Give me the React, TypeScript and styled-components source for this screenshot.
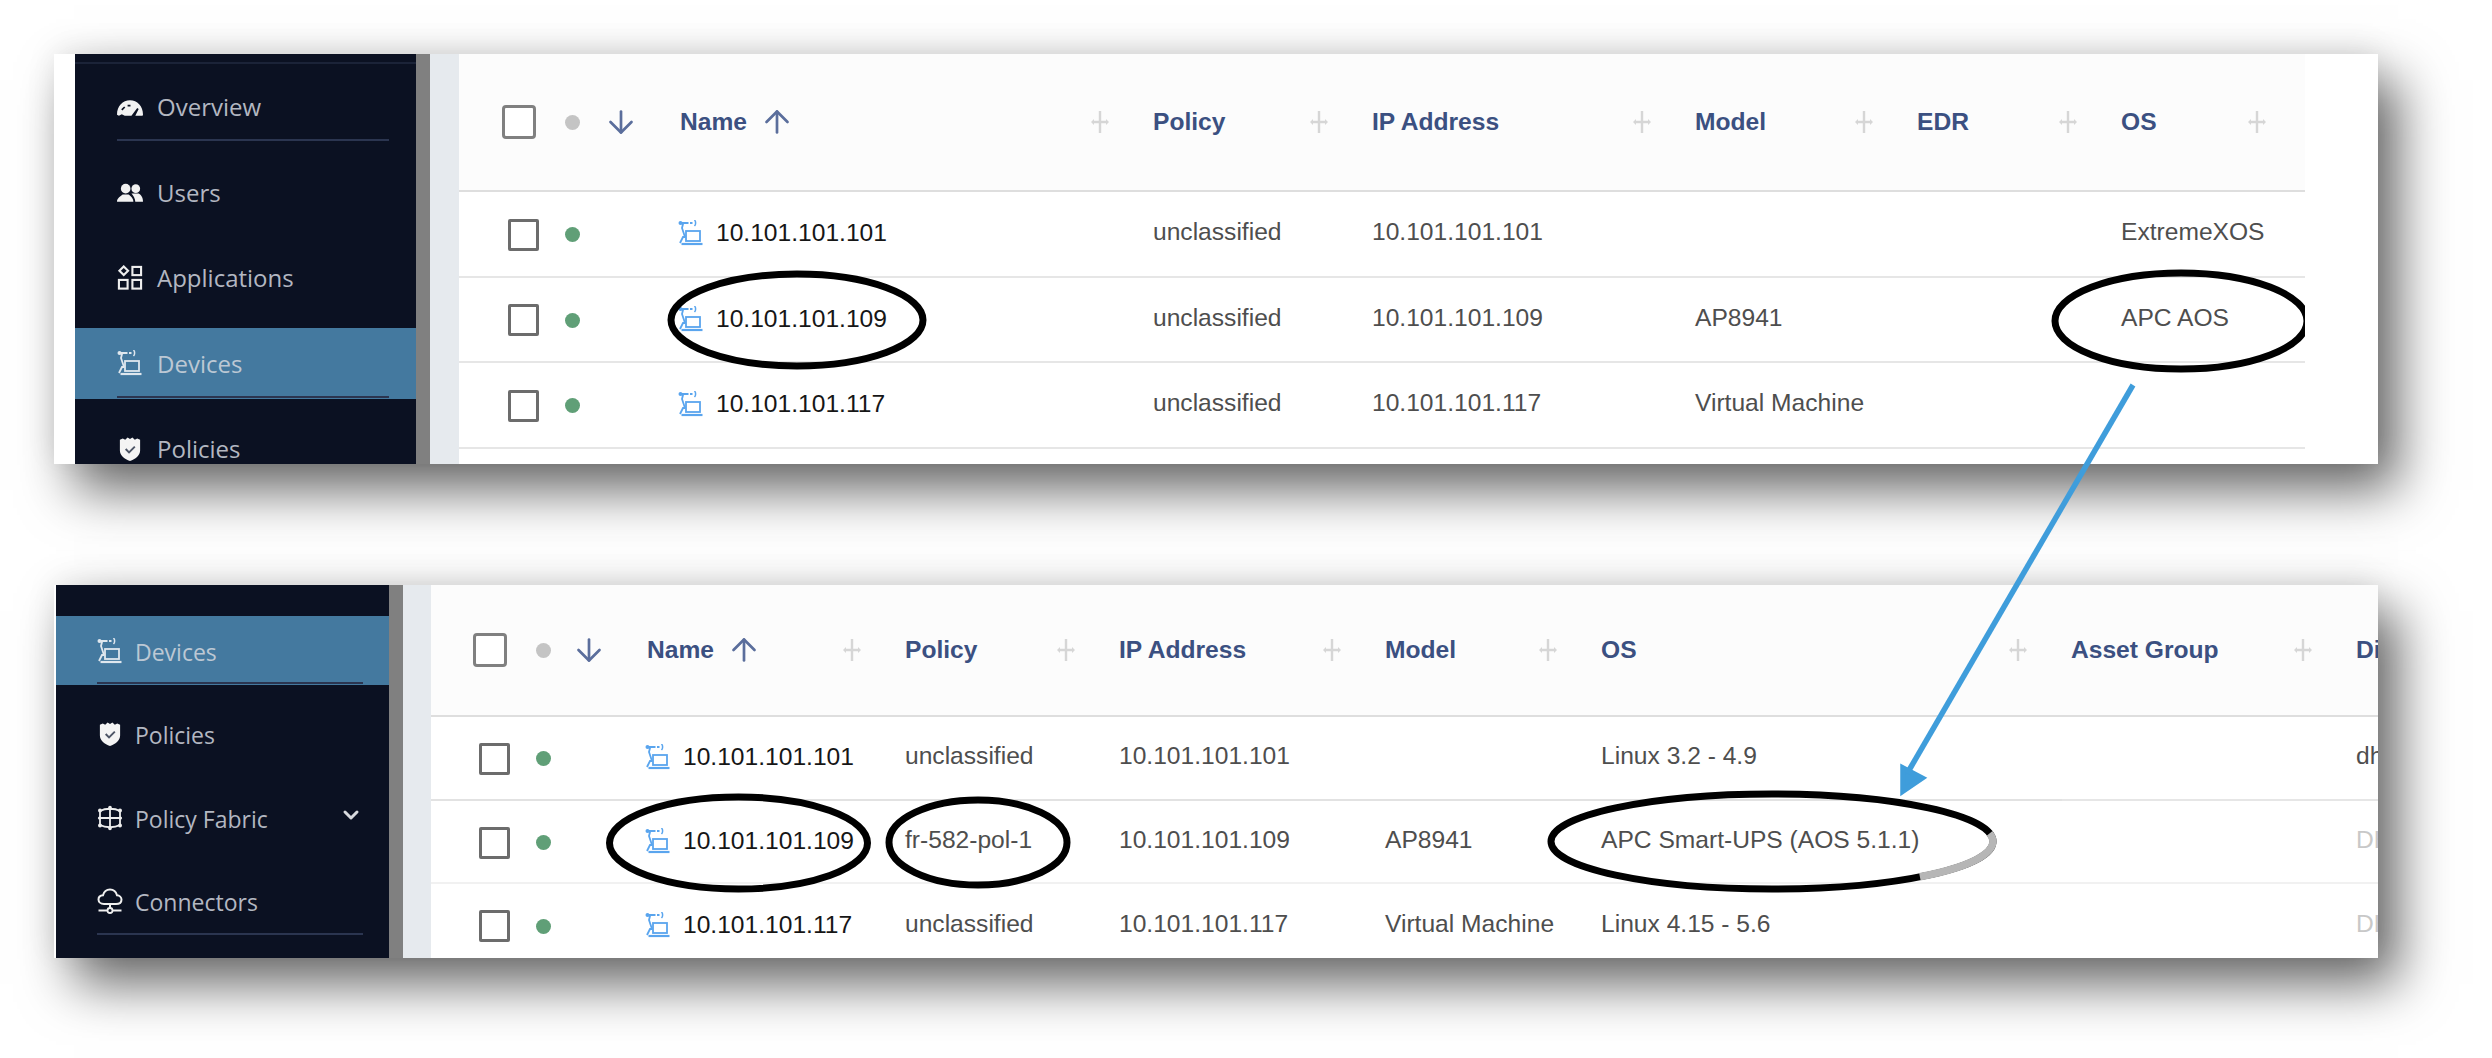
import { ArrowDown, ArrowUp, ChevronDown } from "lucide-react";
import styled, { createGlobalStyle } from "styled-components";

const GlobalStyle = createGlobalStyle`
  html, body {
    margin: 0;
    padding: 0;
    background: #fff;
    overflow: hidden;
  }
`;

function GaugeIcon() {
  return (
    <NavSvg viewBox="0 0 27 24" $color="#f2f2f2">
      <path d="M0 20C0 11 6 5 13.500 5S27 11 27 20l-.5 1H19l3.500-7-1.500-1-6 8H8l-3-1.500-3 1.500z" fill="currentColor" />
      <path d="M5 15l3-3M11 10.500h3" stroke="#0b1122" strokeWidth="1.800" />
    </NavSvg>
  );
}

function UsersIcon() {
  return (
    <NavSvg viewBox="0 0 27 24" $color="#f2f2f2">
      <circle cx="9" cy="8.500" r="5" fill="currentColor" />
      <path d="M0 22c0-4 4-6 6-7.500h6c2 1.500 5 3.500 5 7.500z" fill="currentColor" />
      <circle cx="19.500" cy="8.500" r="4.500" fill="currentColor" />
      <path d="M15 13.500h7.500c2 1 4.500 3.500 4.500 8.500h-8c0-3-2-6.500-4-8.500z" fill="currentColor" />
    </NavSvg>
  );
}

function AppsIcon() {
  return (
    <NavSvg viewBox="0 0 27 27" $color="#eeeeee">
      <g fill="none" stroke="currentColor" strokeWidth="2.200">
        <path d="M7 1.500 11.500 6 7 10.500 2.500 6z" />
        <rect x="16" y="2" width="9" height="8.500" />
        <rect x="2" y="15.500" width="9" height="9" />
        <rect x="16" y="15.500" width="9" height="9" />
      </g>
    </NavSvg>
  );
}

function DeviceIcon({ color }: { color: string }) {
  return (
    <NavSvg viewBox="0 0 25 26" $color={color}>
      <g fill="none" stroke="currentColor" strokeWidth="1.800">
        <path d="M3 3h11" strokeDasharray="7 1.500" />
        <path d="M1.500 3l3 1-1 4 3 9" />
        <path d="M1.500 23l3-6h2.500" />
        <rect x="7.500" y="11" width="14" height="10" />
        <path d="M3 24h21" strokeWidth="2.200" />
      </g>
      <circle cx="2" cy="3" r="2" fill="currentColor" />
      <path d="M16 0c1.500 1.500 1.500 4.500 0 6" fill="none" stroke="currentColor" strokeWidth="1.500" />
    </NavSvg>
  );
}

function ShieldIcon() {
  return (
    <NavSvg viewBox="0 0 25 27" $color="#f4f4f4">
      <path d="M2 4l3-1.500L7.500 4 10 1.500 12.500 3 15 1.500 17.500 4 20 2.500 23 4v11c0 5-5 9-10.500 11C7 24 2 20 2 15z" fill="currentColor" />
      <path d="M8 13.500l3.500 3.500 6-6" fill="none" stroke="#4d5566" strokeWidth="2" />
    </NavSvg>
  );
}

function FabricIcon() {
  return (
    <NavSvg viewBox="0 0 25 26" $color="#eeeeee">
      <path d="M2.500 6C8 3 17 3 22.500 6v14C17 23 8 23 2.500 20zM12.500 2v22M1.500 13h22" fill="none" stroke="currentColor" strokeWidth="1.800" />
      <g fill="currentColor">
        <circle cx="2.500" cy="5.500" r="2" />
        <circle cx="22.500" cy="5.500" r="2" />
        <circle cx="2.500" cy="20.500" r="2" />
        <circle cx="22.500" cy="20.500" r="2" />
        <circle cx="12.500" cy="2.500" r="1.800" />
        <circle cx="12.500" cy="23.500" r="1.800" />
        <circle cx="2" cy="13" r="1.600" />
        <circle cx="23" cy="13" r="1.600" />
      </g>
    </NavSvg>
  );
}

function CloudIcon() {
  return (
    <NavSvg viewBox="0 0 25 26" $color="#f0f0f0">
      <path d="M6.500 16C3 16 1 13.800 1 11.500 1 9 3 7.500 5.500 7.300 6.500 3.500 9.500 1.500 12.500 1.500c3.500 0 6 2 7 5.800 2.500.2 4.500 2 4.500 4.200 0 2.500-2 4.500-5.500 4.500z" fill="none" stroke="currentColor" strokeWidth="2" />
      <path d="M12.500 16v5M1 22.500h8.500M15.500 22.500H24" fill="none" stroke="currentColor" strokeWidth="2" />
      <circle cx="12.500" cy="22.500" r="2.500" fill="none" stroke="currentColor" strokeWidth="1.800" />
    </NavSvg>
  );
}

function PlusIcon() {
  return (
    <PlusSvg viewBox="0 0 18 24">
      <path d="M9 1v22M3 12h12" fill="none" stroke="currentColor" strokeWidth="2.400" />
      <path d="M0 12l3-3v6zM18 12l-3-3v6z" fill="currentColor" />
    </PlusSvg>
  );
}

type NavEntry = {
  label: string;
  icon: React.ReactNode;
  active?: boolean;
  rule?: boolean;
  chevron?: boolean;
};

const navTop: NavEntry[] = [
  { label: "Overview", icon: <GaugeIcon />, rule: true },
  { label: "Users", icon: <UsersIcon /> },
  { label: "Applications", icon: <AppsIcon /> },
  { label: "Devices", icon: <DeviceIcon color="#dfe7ee" />, active: true, rule: true },
  { label: "Policies", icon: <ShieldIcon /> },
];

const navBottom: NavEntry[] = [
  { label: "Devices", icon: <DeviceIcon color="#dfe7ee" />, active: true, rule: true },
  { label: "Policies", icon: <ShieldIcon /> },
  { label: "Policy Fabric", icon: <FabricIcon />, chevron: true },
  { label: "Connectors", icon: <CloudIcon />, rule: true },
];

type Column = { title: string; width: number };
type Text = { text: string; faint?: boolean };
type Device = { name: string; cells: Text[]; strongLine?: number };

const topColumns: Column[] = [
  { title: "Policy", width: 219 },
  { title: "IP Address", width: 323 },
  { title: "Model", width: 222 },
  { title: "EDR", width: 204 },
  { title: "OS", width: 189 },
];

const topDevices: Device[] = [
  {
    name: "10.101.101.101",
    cells: [{ text: "unclassified" }, { text: "10.101.101.101" }, { text: "" }, { text: "" }, { text: "ExtremeXOS" }],
  },
  {
    name: "10.101.101.109",
    cells: [{ text: "unclassified" }, { text: "10.101.101.109" }, { text: "AP8941" }, { text: "" }, { text: "APC AOS" }],
  },
  {
    name: "10.101.101.117",
    cells: [{ text: "unclassified" }, { text: "10.101.101.117" }, { text: "Virtual Machine" }, { text: "" }, { text: "" }],
  },
];

const bottomColumns: Column[] = [
  { title: "Policy", width: 214 },
  { title: "IP Address", width: 266 },
  { title: "Model", width: 216 },
  { title: "OS", width: 470 },
  { title: "Asset Group", width: 285 },
  { title: "Discovery", width: 120 },
];

const bottomDevices: Device[] = [
  {
    name: "10.101.101.101",
    cells: [{ text: "unclassified" }, { text: "10.101.101.101" }, { text: "" }, { text: "Linux 3.2 - 4.9" }, { text: "" }, { text: "dhcp" }],
  },
  {
    name: "10.101.101.109",
    strongLine: 1631,
    cells: [{ text: "fr-582-pol-1" }, { text: "10.101.101.109" }, { text: "AP8941" }, { text: "APC Smart-UPS (AOS 5.1.1)" }, { text: "" }, { text: "DHCP", faint: true }],
  },
  {
    name: "10.101.101.117",
    cells: [{ text: "unclassified" }, { text: "10.101.101.117" }, { text: "Virtual Machine" }, { text: "Linux 4.15 - 5.6" }, { text: "" }, { text: "DHCP", faint: true }],
  },
];

function Nav({ items, $width, $top, $item, $gap, $left, $right, $textGap, $size, $drop, $line }: {
  items: NavEntry[];
  $width: number;
  $top: number;
  $item: number;
  $gap: number;
  $left: number;
  $right: number;
  $textGap: number;
  $size: number;
  $drop: number;
  $line?: boolean;
}) {
  return (
    <Sidebar $width={$width} $top={$top} $gap={$gap} $line={$line}>
      {items.map((item) => (
        <NavItem key={item.label} $active={item.active} $height={$item} $left={$left} $right={$right} $textGap={$textGap}>
          {item.icon}
          <NavLabel $active={item.active} $size={$size} $drop={$drop}>{item.label}</NavLabel>
          {item.chevron && (
            <NavChevron>
              <ChevronDown size={24} strokeWidth={3} />
            </NavChevron>
          )}
          {item.rule && <NavRule $left={$left} $right={$right} />}
        </NavItem>
      ))}
    </Sidebar>
  );
}

function DeviceTable({ columns, devices, head, row, nameWidth, dotWidth, arrowWidth, checkLeft, rowCheckLeft, children }: {
  columns: Column[];
  devices: Device[];
  head: number;
  row: number;
  nameWidth: number;
  dotWidth: number;
  arrowWidth: number;
  checkLeft: number;
  rowCheckLeft: number;
  children: React.ReactNode;
}) {
  const lead = `${checkLeft + 63}px ${dotWidth}px ${arrowWidth}px ${nameWidth}px`;
  const template = `${lead} ${columns.map((c) => `${c.width}px`).join(" ")}`;
  return (
    <Table>
      <HeadRow $columns={template} $height={head}>
        <HeadCheck $left={checkLeft} />
        <HeadDot />
        <SortArrow><ArrowDown size={36} strokeWidth={1.8} /></SortArrow>
        <HeadCell $first>
          <HeadName>
            Name
            <SortArrow><ArrowUp size={36} strokeWidth={1.8} /></SortArrow>
          </HeadName>
          <PlusIcon />
        </HeadCell>
        {columns.map((c) => (
          <HeadCell key={c.title}>
            {c.title}
            <PlusIcon />
          </HeadCell>
        ))}
      </HeadRow>
      {devices.map((d) => (
        <Row key={d.name} $columns={template} $height={row} $strongLine={d.strongLine}>
          <RowCheck $left={rowCheckLeft} />
          <RowDot />
          <span />
          <NameCell>
            <DeviceIcon color="#5aa5ee" />
            {d.name}
          </NameCell>
          {d.cells.map((c, i) => (
            <Cell key={i} $faint={c.faint}>{c.text}</Cell>
          ))}
        </Row>
      ))}
      {children}
    </Table>
  );
}

export default function App() {
  return (
    <Page>
      <GlobalStyle />
      <Panel $height={410} $padLeft={21} $padRight={73}>
        <Nav items={navTop} $width={341} $top={17} $item={71} $gap={14.5} $left={42} $right={27} $textGap={14} $size={24} $drop={0} $line />
        <Rail />
        <Gutter $width={29} />
        <DeviceTable
          columns={topColumns}
          devices={topDevices}
          head={138}
          row={85.5}
          nameWidth={475}
          dotWidth={38}
          arrowWidth={75}
          checkLeft={43}
          rowCheckLeft={49}
        >
          <Ovals viewBox="0 0 1846 410">
            <ellipse cx="338" cy="266" rx="126" ry="46" />
            <ellipse cx="1722" cy="267" rx="126" ry="48" />
          </Ovals>
        </DeviceTable>
      </Panel>
      <Panel $height={373} $padLeft={2} $padRight={0}>
        <Nav items={navBottom} $width={333} $top={31} $item={69} $gap={14.6} $left={41} $right={26} $textGap={12} $size={23} $drop={2} />
        <Rail />
        <Gutter $width={28} />
        <DeviceTable
          columns={bottomColumns}
          devices={bottomDevices}
          head={132}
          row={83.7}
          nameWidth={260}
          dotWidth={35}
          arrowWidth={74}
          checkLeft={42}
          rowCheckLeft={48}
        >
          <Ovals viewBox="0 0 1947 373">
            <ellipse cx="307.500" cy="258" rx="129" ry="46" />
            <ellipse cx="547" cy="257.500" rx="89" ry="42.500" />
            <ellipse cx="1341" cy="256.500" rx="221" ry="47.500" />
            <GreyArc d="M1558.600 248.300A221 47.500 0 0 1 1488.900 291.800" />
          </Ovals>
        </DeviceTable>
      </Panel>
      <Pointer viewBox="0 0 2492 1058">
        <path d="M2133 385 1908 772" />
        <polygon points="1903,791 1903,768 1922,778" />
      </Pointer>
    </Page>
  );
}

const Page = styled.div`
  position: relative;
  box-sizing: border-box;
  width: 2492px;
  height: 1058px;
  padding: 54px 114px 0 54px;
  display: flex;
  flex-direction: column;
  gap: 121px;
  background: #fff;
`;

const Panel = styled.section<{ $height: number; $padLeft: number; $padRight: number }>`
  display: flex;
  flex: none;
  height: ${(p) => p.$height}px;
  padding: 0 ${(p) => p.$padRight}px 0 ${(p) => p.$padLeft}px;
  background: #fff;
  box-shadow: 20px 26px 50px rgba(0, 0, 0, 0.6), 0 -6px 30px rgba(0, 0, 0, 0.07);
`;

const Sidebar = styled.nav<{ $width: number; $top: number; $gap: number; $line?: boolean }>`
  position: relative;
  flex: none;
  width: ${(p) => p.$width}px;
  box-sizing: border-box;
  padding-top: ${(p) => p.$top}px;
  display: flex;
  flex-direction: column;
  gap: ${(p) => p.$gap}px;
  overflow: hidden;
  background: #0b1122;

  &::before {
    content: "";
    display: ${(p) => (p.$line ? "block" : "none")};
    position: absolute;
    top: 8px;
    left: 0;
    right: 0;
    height: 2px;
    background: #1b2338;
  }
`;

const NavItem = styled.div<{ $active?: boolean; $height: number; $left: number; $right: number; $textGap: number }>`
  position: relative;
  flex: none;
  box-sizing: border-box;
  height: ${(p) => p.$height}px;
  padding: 0 ${(p) => p.$right}px 0 ${(p) => p.$left}px;
  display: flex;
  align-items: center;
  gap: ${(p) => p.$textGap}px;
  background: ${(p) => (p.$active ? "#44799f" : "transparent")};
`;

const NavLabel = styled.span<{ $active?: boolean; $size: number; $drop: number }>`
  font-family: "Open Sans", sans-serif;
  font-size: ${(p) => p.$size}px;
  margin-top: ${(p) => p.$drop}px;
  color: ${(p) => (p.$active ? "#bcc8d4" : "#b3b7c1")};
`;

const NavSvg = styled.svg<{ $color: string }>`
  flex: none;
  width: 26px;
  height: 26px;
  color: ${(p) => p.$color};
`;

const NavChevron = styled.span`
  margin-left: auto;
  display: flex;
  color: #d8dade;
  transform: translateY(-3px);
`;

const NavRule = styled.i<{ $left: number; $right: number }>`
  position: absolute;
  left: ${(p) => p.$left}px;
  right: ${(p) => p.$right}px;
  bottom: 1px;
  height: 2px;
  background: #2b3550;
`;

const Rail = styled.div`
  flex: none;
  width: 14px;
  background: #808080;
`;

const Gutter = styled.div<{ $width: number }>`
  flex: none;
  width: ${(p) => p.$width}px;
  background: #e6eaee;
`;

const Table = styled.div`
  position: relative;
  flex: 1;
  min-width: 0;
  overflow: hidden;
  font-family: "Liberation Sans", Arial, sans-serif;
  font-size: 24.600px;
`;

const HeadRow = styled.div<{ $columns: string; $height: number }>`
  display: grid;
  grid-template-columns: ${(p) => p.$columns};
  align-items: center;
  box-sizing: border-box;
  height: ${(p) => p.$height}px;
  border-bottom: 2px solid #dedede;
  background: #fcfcfc;
`;

const HeadCell = styled.div<{ $first?: boolean }>`
  display: flex;
  align-items: center;
  justify-content: space-between;
  padding: 0 44px 0 ${(p) => (p.$first ? 2 : 0)}px;
  font-weight: 700;
  white-space: nowrap;
  color: #3b5081;
`;

const HeadName = styled.span`
  display: flex;
  align-items: center;
  gap: 12px;
`;

const SortArrow = styled.span`
  display: flex;
  color: #5b6e9c;
`;

const PlusSvg = styled.svg`
  flex: none;
  width: 18px;
  height: 24px;
  color: #d6d6d6;
`;

const Check = styled.span<{ $left: number }>`
  box-sizing: border-box;
  display: block;
  margin-left: ${(p) => p.$left}px;
  background: #fff;
`;

const HeadCheck = styled(Check)`
  width: 34px;
  height: 34px;
  border: 3px solid #808080;
  border-radius: 4px;
`;

const RowCheck = styled(Check)`
  width: 31px;
  height: 32px;
  margin-top: 2px;
  border: 3px solid #6c6c6c;
  border-radius: 2px;
`;

const Dot = styled.span`
  display: block;
  width: 15px;
  height: 15px;
  border-radius: 50%;
`;

const HeadDot = styled(Dot)`
  background: #c4c4c4;
`;

const RowDot = styled(Dot)`
  margin-top: 2px;
  background: #609f77;
`;

const Row = styled.div<{ $columns: string; $height: number; $strongLine?: number }>`
  position: relative;
  display: grid;
  grid-template-columns: ${(p) => p.$columns};
  align-items: center;
  box-sizing: border-box;
  height: ${(p) => p.$height}px;
  border-bottom: 2px solid ${(p) => (p.$strongLine ? "#f1f1f1" : "#e6e6e6")};

  &::before {
    content: "";
    position: absolute;
    top: -2px;
    left: 0;
    width: ${(p) => p.$strongLine ?? 0}px;
    height: 2px;
    background: #e2e2e2;
  }
`;

const Cell = styled.div<{ $faint?: boolean }>`
  padding-bottom: 3px;
  white-space: nowrap;
  color: ${(p) => (p.$faint ? "#c8c8c8" : "#4e4e4e")};
`;

const NameCell = styled.div`
  display: flex;
  align-items: center;
  gap: 12px;
  white-space: nowrap;
  color: #161616;
  padding-bottom: 1px;
`;

const Ovals = styled.svg`
  position: absolute;
  top: 0;
  left: 0;
  width: 100%;
  height: 100%;
  pointer-events: none;
  fill: none;
  stroke: #000;
  stroke-width: 7px;
`;

const GreyArc = styled.path`
  stroke: #b6b6b6;
  stroke-width: 7.500px;
`;

const Pointer = styled.svg`
  position: absolute;
  top: 0;
  left: 0;
  width: 2492px;
  height: 1058px;
  pointer-events: none;
  stroke: #3f9ddb;
  stroke-width: 5.500px;
  fill: #3f9ddb;
`;
